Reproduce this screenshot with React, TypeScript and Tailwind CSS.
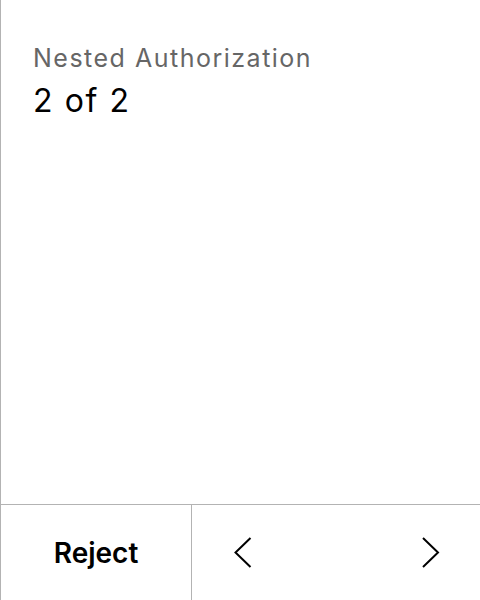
import React from "react";

export default function App() {
  return (
    <div
      className="w-[480px] h-[600px] flex flex-col bg-white border-l border-[#b3b3b3]"
      style={{ fontFamily: "Inter, 'Noto Sans', sans-serif" }}
    >
      <div className="flex-1 flex flex-col pl-8 pt-[42px]">
        <div className="text-[25px] leading-[32px] tracking-[1.5px] text-[#666666]">Nested Authorization</div>
        <div className="mt-[7px] text-[32px] leading-[40px] tracking-[1.6px] text-black">2 of 2</div>
      </div>
      <div className="h-[96px] flex border-t border-[#b3b3b3]">
        <button className="w-[191px] flex items-center justify-center text-[28px] font-semibold text-black border-r border-[#b3b3b3]">
          Reject
        </button>
        <div className="flex-1 flex items-center justify-between pl-[42px] pr-10">
          <svg width="18" height="32" viewBox="0 0 18 32" fill="none">
            <path d="M16.5 1 L1.5 15.5 L16.5 30" stroke="black" strokeWidth="2" />
          </svg>
          <svg width="18" height="32" viewBox="0 0 18 32" fill="none">
            <path d="M1 1 L16 15.5 L1 30" stroke="black" strokeWidth="2" />
          </svg>
        </div>
      </div>
    </div>
  );
}
